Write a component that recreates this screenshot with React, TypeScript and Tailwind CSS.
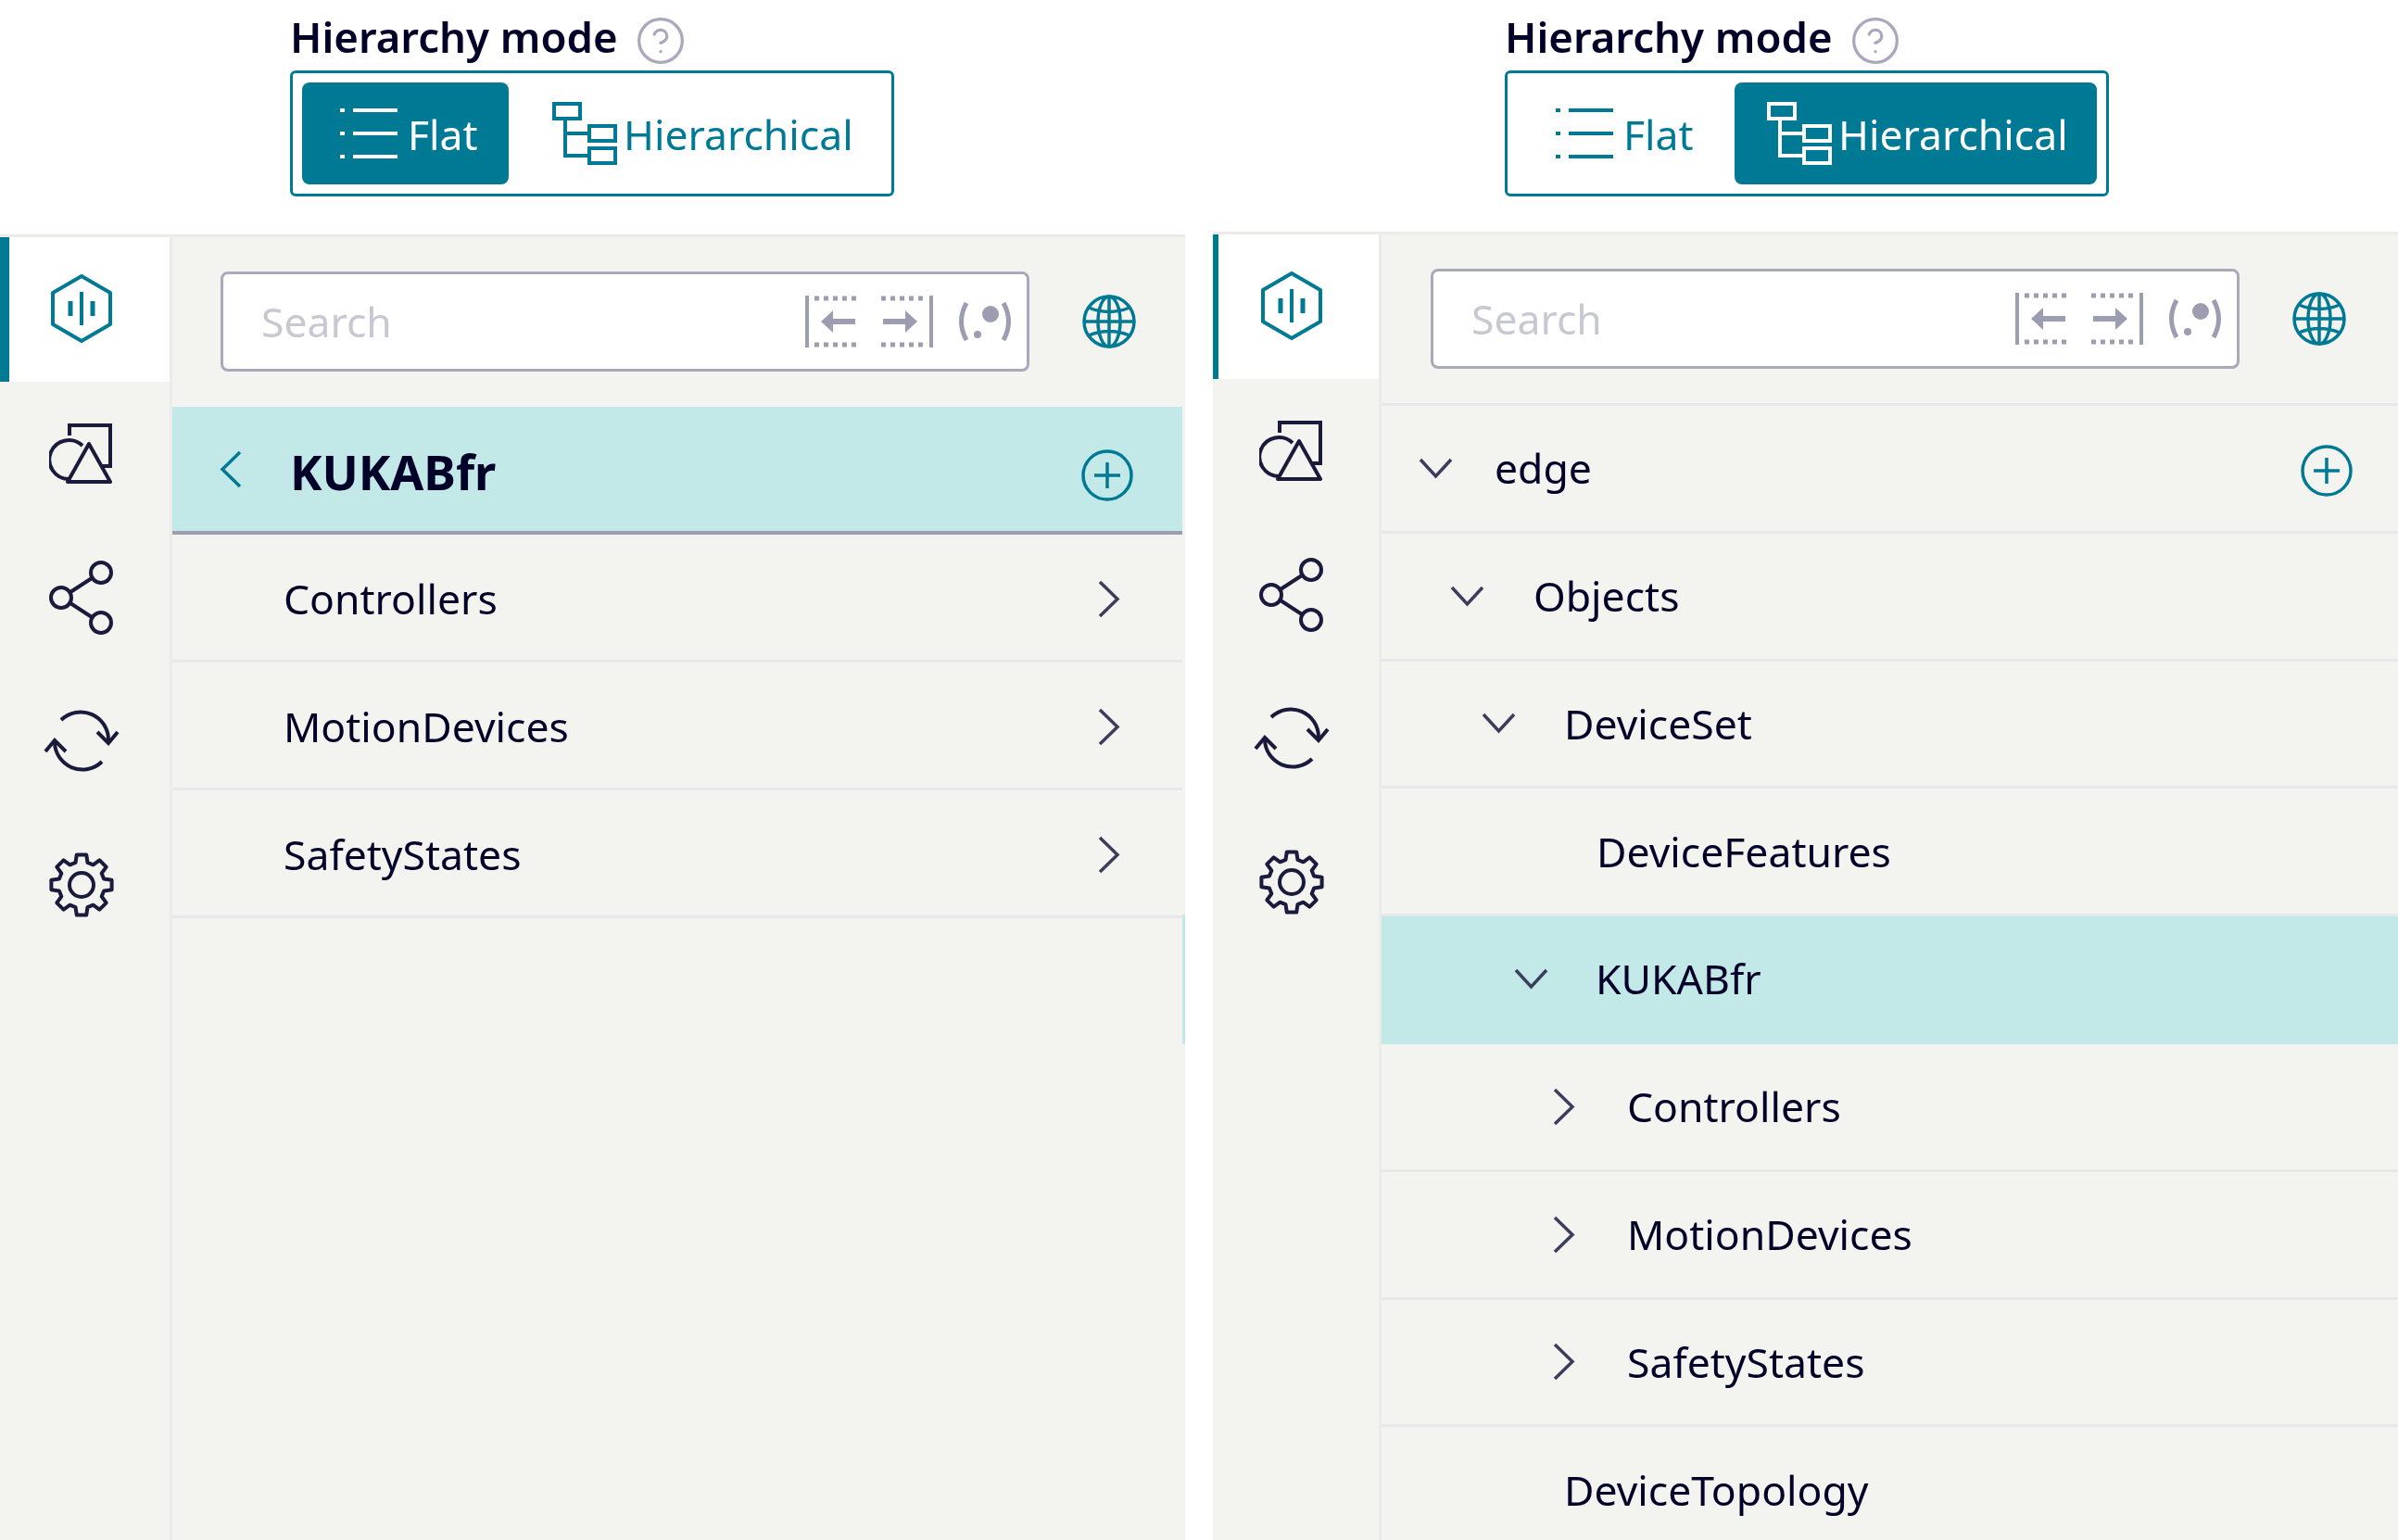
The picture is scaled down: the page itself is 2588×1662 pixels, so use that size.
import { CircleHelp } from "lucide-react";

const teal = "#007a94";
const navy = "#1a1a3c";
const grey = "#9d9db2";

function Hexagon() {
  return (
    <svg width="68" height="74" viewBox="0 0 68 74" fill="none" stroke={teal} strokeWidth="4">
      <path d="M34 2 65 20V54L34 72 3 54V20Z" strokeLinejoin="round" />
      <path d="M34 19V55" />
      <path d="M22 29V45M46 29V45" strokeWidth="5" />
    </svg>
  );
}

function Shapes() {
  return (
    <svg width="70" height="70" viewBox="0 0 70 70" fill="none" stroke={navy} strokeWidth="4">
      <path d="M22 15V4H66V48H58" />
      <path d="M21 62A21 21 0 1 1 36 26" />
      <path d="M43 24 66 65H20Z" strokeLinejoin="round" />
    </svg>
  );
}

function Share() {
  return (
    <svg width="70" height="80" viewBox="0 0 70 80" fill="none" stroke={navy} strokeWidth="4">
      <circle cx="56" cy="13" r="11" />
      <circle cx="13" cy="40" r="11" />
      <circle cx="56" cy="67" r="11" />
      <path d="M23 34 46 19M23 46 46 61" />
    </svg>
  );
}

function Sync() {
  return (
    <svg width="82" height="74" viewBox="0 0 82 74" fill="none" stroke={navy} strokeWidth="4">
      <path d="M19 14A30 30 0 0 1 70 36" />
      <path d="M58 27 70 39 80 27" />
      <path d="M63 59A30 30 0 0 1 12 38" />
      <path d="M2 48 12 36 24 48" />
    </svg>
  );
}

// eight teeth, worked out from the angles instead of typing each point
function Gear() {
  const points: string[] = [];
  for (let i = 0; i < 8; i++) {
    const a = (i * Math.PI) / 4;
    const at = (r: number, d: number) => {
      const t = a + (d * Math.PI) / 180;
      return `${(36 + r * Math.cos(t)).toFixed(1)} ${(36 + r * Math.sin(t)).toFixed(1)}`;
    };
    points.push(at(25, -15), at(33, -9), at(33, 9), at(25, 15));
  }
  return (
    <svg width="72" height="72" viewBox="0 0 72 72" fill="none" stroke={navy} strokeWidth="4" strokeLinejoin="round">
      <path d={`M${points.join("L")}Z`} />
      <circle cx="36" cy="36" r="13" />
    </svg>
  );
}

function Globe() {
  return (
    <svg width="60" height="60" viewBox="0 0 60 60" fill="none" stroke={teal} strokeWidth="3.5">
      <circle cx="30" cy="30" r="27" />
      <ellipse cx="30" cy="30" rx="12" ry="27" />
      <path d="M30 3V57M3 30H57M8 15Q30 24 52 15M8 45Q30 36 52 45" />
    </svg>
  );
}

function PlusCircle() {
  return (
    <svg width="56" height="56" viewBox="0 0 56 56" fill="none" stroke={teal} strokeWidth="3.5">
      <circle cx="28" cy="28" r="26" />
      <path d="M28 14V42M14 28H42" />
    </svg>
  );
}

function ListIcon({ color }: { color: string }) {
  return (
    <svg width="64" height="58" viewBox="0 0 64 58" fill="none" stroke={color} strokeWidth="4">
      <path d="M15 4H63M15 29H63M15 54H63" />
      <path d="M1 4H6M1 29H6M1 54H6" />
    </svg>
  );
}

function TreeIcon({ color }: { color: string }) {
  return (
    <svg width="70" height="68" viewBox="0 0 70 68" fill="none" stroke={color} strokeWidth="4">
      <rect x="2" y="2" width="28" height="16" />
      <rect x="40" y="26" width="28" height="16" />
      <rect x="40" y="50" width="28" height="16" />
      <path d="M14 18V58H40M14 34H40" />
    </svg>
  );
}

function JumpLeft() {
  return (
    <svg width="56" height="56" viewBox="0 0 56 56" fill="none" stroke={grey} strokeWidth="5">
      <path d="M2 0V56" strokeWidth="4" />
      <path d="M10 3H56M10 53H56" strokeDasharray="5 5" />
      <path d="M54 28H26" strokeWidth="6" />
      <path d="M30 16 17 28 30 40Z" fill={grey} stroke="none" />
    </svg>
  );
}

function JumpRight() {
  return (
    <svg width="56" height="56" viewBox="0 0 56 56" fill="none" stroke={grey} strokeWidth="5">
      <path d="M54 0V56" strokeWidth="4" />
      <path d="M0 3H46M0 53H46" strokeDasharray="5 5" />
      <path d="M2 28H30" strokeWidth="6" />
      <path d="M26 16 39 28 26 40Z" fill={grey} stroke="none" />
    </svg>
  );
}

function Regex() {
  return (
    <svg width="60" height="44" viewBox="0 0 60 44" fill="none" stroke={grey} strokeWidth="5">
      <path d="M10 2Q-1 22 10 42M50 2Q61 22 50 42" />
      <circle cx="22" cy="36" r="4" fill={grey} stroke="none" />
      <circle cx="36" cy="14" r="9" fill={grey} stroke="none" />
    </svg>
  );
}

function ChevronRight() {
  return (
    <svg width="25" height="41" viewBox="0 0 25 41" fill="none" stroke="#3c3c5c" strokeWidth="3.5">
      <path d="M3 2 22 20.5 3 39" />
    </svg>
  );
}

function ChevronDown() {
  return (
    <svg width="37" height="25" viewBox="0 0 37 25" fill="none" stroke="#3c3c5c" strokeWidth="3.5">
      <path d="M2 3 18.5 21 35 3" />
    </svg>
  );
}

function ChevronLeft() {
  return (
    <svg width="25" height="41" viewBox="0 0 25 41" fill="none" stroke={teal} strokeWidth="3.5">
      <path d="M22 2 3 20.5 22 39" />
    </svg>
  );
}

function Toggle({ active }: { active: "flat" | "hier" }) {
  const flat = active === "flat";
  return (
    <div className="w-[652px] h-[136px] border-[3px] border-[#007a94] rounded-[6px] bg-white p-[10px] flex">
      <div
        className={
          flat
            ? "w-[223px] rounded-[8px] bg-[#007a94] text-white flex items-center pl-[40px] gap-[10px]"
            : "w-[235px] rounded-[8px] text-[#007a94] flex items-center pl-[41px] gap-[10px]"
        }
      >
        <ListIcon color={flat ? "#fff" : teal} />
        <span className="mt-[2px]">Flat</span>
      </div>
      <div
        className={
          flat
            ? "flex-1 rounded-[8px] text-[#007a94] flex items-center pl-[47px] gap-[7px]"
            : "flex-1 rounded-[8px] bg-[#007a94] text-white flex items-center pl-[35px] gap-[7px]"
        }
      >
        <TreeIcon color={flat ? teal : "#fff"} />
        <span className="mt-[2px]">Hierarchical</span>
      </div>
    </div>
  );
}

function Sidebar({ narrow }: { narrow?: boolean }) {
  const icons = [<Shapes />, <Share />, <Sync />, <Gear />];
  return (
    <div
      className={
        narrow
          ? "w-[182px] shrink-0 border-r-[3px] border-[#ebebea]"
          : "w-[186px] shrink-0 border-r-[3px] border-[#ebebea]"
      }
    >
      <div className="relative h-[156px] pb-[3px] bg-white flex items-center">
        <div
          className={
            narrow
              ? "absolute left-0 top-0 bottom-0 w-[6px] bg-[#007a94]"
              : "absolute left-0 top-0 bottom-0 w-[10px] bg-[#007a94]"
          }
        />
        <div className={narrow ? "w-[170px] flex justify-center" : "w-[176px] flex justify-center"}>
          <Hexagon />
        </div>
      </div>
      {icons.map((icon, i) => (
        <div key={i} className="h-[155px] flex items-center">
          <div className={narrow ? "w-[170px] flex justify-center" : "w-[176px] flex justify-center"}>{icon}</div>
        </div>
      ))}
    </div>
  );
}

function SearchRow({ bordered }: { bordered?: boolean }) {
  return (
    <div
      className={
        bordered
          ? "h-[185px] pl-[53px] pt-[37px] flex items-start gap-[56px] border-b-[3px] border-[#e8e8ea]"
          : "h-[183px] pl-[52px] pt-[37px] flex items-start gap-[56px]"
      }
    >
      <div className="w-[873px] h-[108px] border-[3px] border-[#a9a9bb] rounded-[8px] bg-white flex items-center pl-[41px] pr-[15px]">
        <span className="text-[#c8c8d2]">Search</span>
        <div className="ml-auto flex items-center gap-[26px]">
          <JumpLeft />
          <JumpRight />
          <Regex />
        </div>
      </div>
      <div className="h-[108px] flex items-center">
        <Globe />
      </div>
    </div>
  );
}

const flatRows = ["Controllers", "MotionDevices", "SafetyStates"];

function FlatPanel() {
  return (
    <div className="relative flex-1 pr-[3px]">
      <SearchRow />
      <div className="h-[138px] bg-[#c2e8e8] border-b-[4px] border-[#9d9db2] flex items-center pl-[51px] pr-[53px]">
        <ChevronLeft />
        <span className="ml-[51px] mt-[6px] font-bold text-[#000028] text-[52px]">KUKABfr</span>
        <div className="ml-auto mt-[14px]">
          <PlusCircle />
        </div>
      </div>
      {flatRows.map((name) => (
        <div
          key={name}
          className="h-[138px] pt-[4px] border-b-[3px] border-[#e8e8ea] flex items-center pl-[120px] pr-[67px] justify-between"
        >
          <span>{name}</span>
          <ChevronRight />
        </div>
      ))}
      <div className="absolute right-0 top-[731px] w-[3px] h-[140px] bg-[#c2e8e8]" />
    </div>
  );
}

function TreeRow({
  label,
  pad,
  slot,
  chevron,
  selected,
  plus,
}: {
  label: string;
  pad: string;
  slot?: string;
  chevron?: "down" | "right";
  selected?: boolean;
  plus?: boolean;
}) {
  return (
    <div
      className={[
        "h-[137.8px] flex items-center border-b-[3px]",
        selected ? "bg-[#c2e8e8] border-[#c2e8e8]" : "border-[#e8e8ea]",
        pad,
      ].join(" ")}
    >
      {chevron && (
        <div className={slot}>
          {chevron === "down" ? <ChevronDown /> : <ChevronRight />}
        </div>
      )}
      <span>{label}</span>
      {plus && (
        <div className="ml-auto mr-[49px] mt-[6px]">
          <PlusCircle />
        </div>
      )}
    </div>
  );
}

function TreePanel() {
  return (
    <div className="flex-1">
      <SearchRow bordered />
      <TreeRow label="edge" pad="pl-[40px]" slot="w-[82px]" chevron="down" plus />
      <TreeRow label="Objects" pad="pl-[74px]" slot="w-[90px]" chevron="down" />
      <TreeRow label="DeviceSet" pad="pl-[108px]" slot="w-[89px]" chevron="down" />
      <TreeRow label="DeviceFeatures" pad="pl-[232px]" />
      <TreeRow label="KUKABfr" pad="pl-[143px]" slot="w-[88px]" chevron="down" selected />
      <TreeRow label="Controllers" pad="pl-[184px]" slot="w-[81px]" chevron="right" />
      <TreeRow label="MotionDevices" pad="pl-[184px]" slot="w-[81px]" chevron="right" />
      <TreeRow label="SafetyStates" pad="pl-[184px]" slot="w-[81px]" chevron="right" />
      <TreeRow label="DeviceTopology" pad="pl-[197px]" />
    </div>
  );
}

function Heading() {
  return (
    <div className="flex items-center h-[76px] gap-[18px] pt-[4px]">
      <span className="font-semibold text-[#000028] text-[45.5px]">Hierarchy mode</span>
      <CircleHelp size={56} strokeWidth={1.4} color="#a9a9bb" className="mt-[8px]" />
    </div>
  );
}

export default function App() {
  return (
    <div className="w-[2588px] h-[1662px] overflow-hidden bg-white flex font-['Noto_Sans',sans-serif] text-[44.5px] leading-none text-[#000028] blur-[0.7px]">
      <div className="w-[1279px] shrink-0 flex flex-col">
        <div className="h-[253px] shrink-0 pl-[313px]">
          <Heading />
          <Toggle active="flat" />
        </div>
        <div className="flex-1 flex bg-[#f3f3ef] border-t-[3px] border-[#ebebea]">
          <Sidebar />
          <FlatPanel />
        </div>
      </div>
      <div className="w-[30px] shrink-0" />
      <div className="flex-1 flex flex-col">
        <div className="h-[250px] shrink-0 pl-[315px]">
          <Heading />
          <Toggle active="hier" />
        </div>
        <div className="flex-1 flex bg-[#f3f3ef] border-t-[3px] border-[#ebebea]">
          <Sidebar narrow />
          <TreePanel />
        </div>
      </div>
    </div>
  );
}
